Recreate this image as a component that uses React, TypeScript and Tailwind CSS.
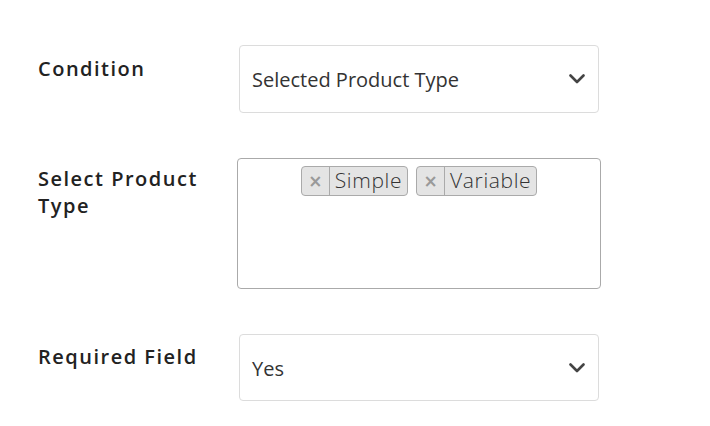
const labelFont = { fontFamily: "'Open Sans', 'Liberation Sans', sans-serif" };

function Chevron() {
 return (
  <svg width="16" height="10" viewBox="0 0 16 10" fill="none">
   <path d="M1.5 1.5 L8 8 L14.5 1.5" stroke="#444" strokeWidth="2.6" strokeLinecap="round" strokeLinejoin="round" />
  </svg>
 );
}

function SelectBox({ value, h }: { value: string; h: string }) {
 return (
  <div className={`ml-[2px] flex w-[360px] items-center justify-between rounded-[4px] border border-[#dcdcdc] bg-white pl-[12px] pr-[13px] ${h}`}>
   <span className="pt-[2px] font-['Open_Sans',sans-serif] text-[20px] text-[#333]">
    {value}
   </span>
   <Chevron />
  </div>
 );
}

function Tag({ label }: { label: string }) {
 return (
  <div className="flex h-[30px] items-stretch rounded-[4px] border border-[#aaa] bg-[#e4e4e4]">
   <span className="flex w-[28px] items-center justify-center border-r border-[#aaa] pt-[2px] font-['DejaVu_Sans',sans-serif] text-[17px] font-bold text-[#999]">
    ×
   </span>
   <span className="flex items-center px-[5px] font-['Open_Sans',sans-serif] text-[21px] font-light tracking-[0.03em] text-[#333]">
    {label}
   </span>
  </div>
 );
}

export default function App() {
 return (
  <div className="min-h-[426px] w-[710px] bg-white pl-[38px] pt-[45px]">
   <div className="flex flex-col gap-[45px]">

    {/* Condition */}
    <div className="flex">
     <div
      className="w-[199px] pt-[10px] text-[20px] font-semibold leading-[27px] tracking-[0.075em] text-[#222]"
      style={labelFont}
     >
      Condition
     </div>
     <SelectBox value="Selected Product Type" h="h-[68px]" />
    </div>

    {/* Product type */}
    <div className="flex">
     <div
      className="mr-[19px] w-[180px] pt-[7px] text-[20px] font-semibold leading-[27px] tracking-[0.075em] text-[#222]"
      style={labelFont}
     >
      Select Product Type
     </div>
     <div className="flex h-[131px] w-[364px] items-start justify-center gap-[8px] rounded-[4px] border border-[#aaa] bg-white pt-[7px]">
      <Tag label="Simple" />
      <Tag label="Variable" />
     </div>
    </div>

    {/* Required */}
    <div className="flex">
     <div
      className="w-[199px] pt-[9px] text-[20px] font-semibold leading-[27px] tracking-[0.075em] text-[#222]"
      style={labelFont}
     >
      Required Field
     </div>
     <SelectBox value="Yes" h="h-[67px]" />
    </div>

   </div>
  </div>
 );
}
